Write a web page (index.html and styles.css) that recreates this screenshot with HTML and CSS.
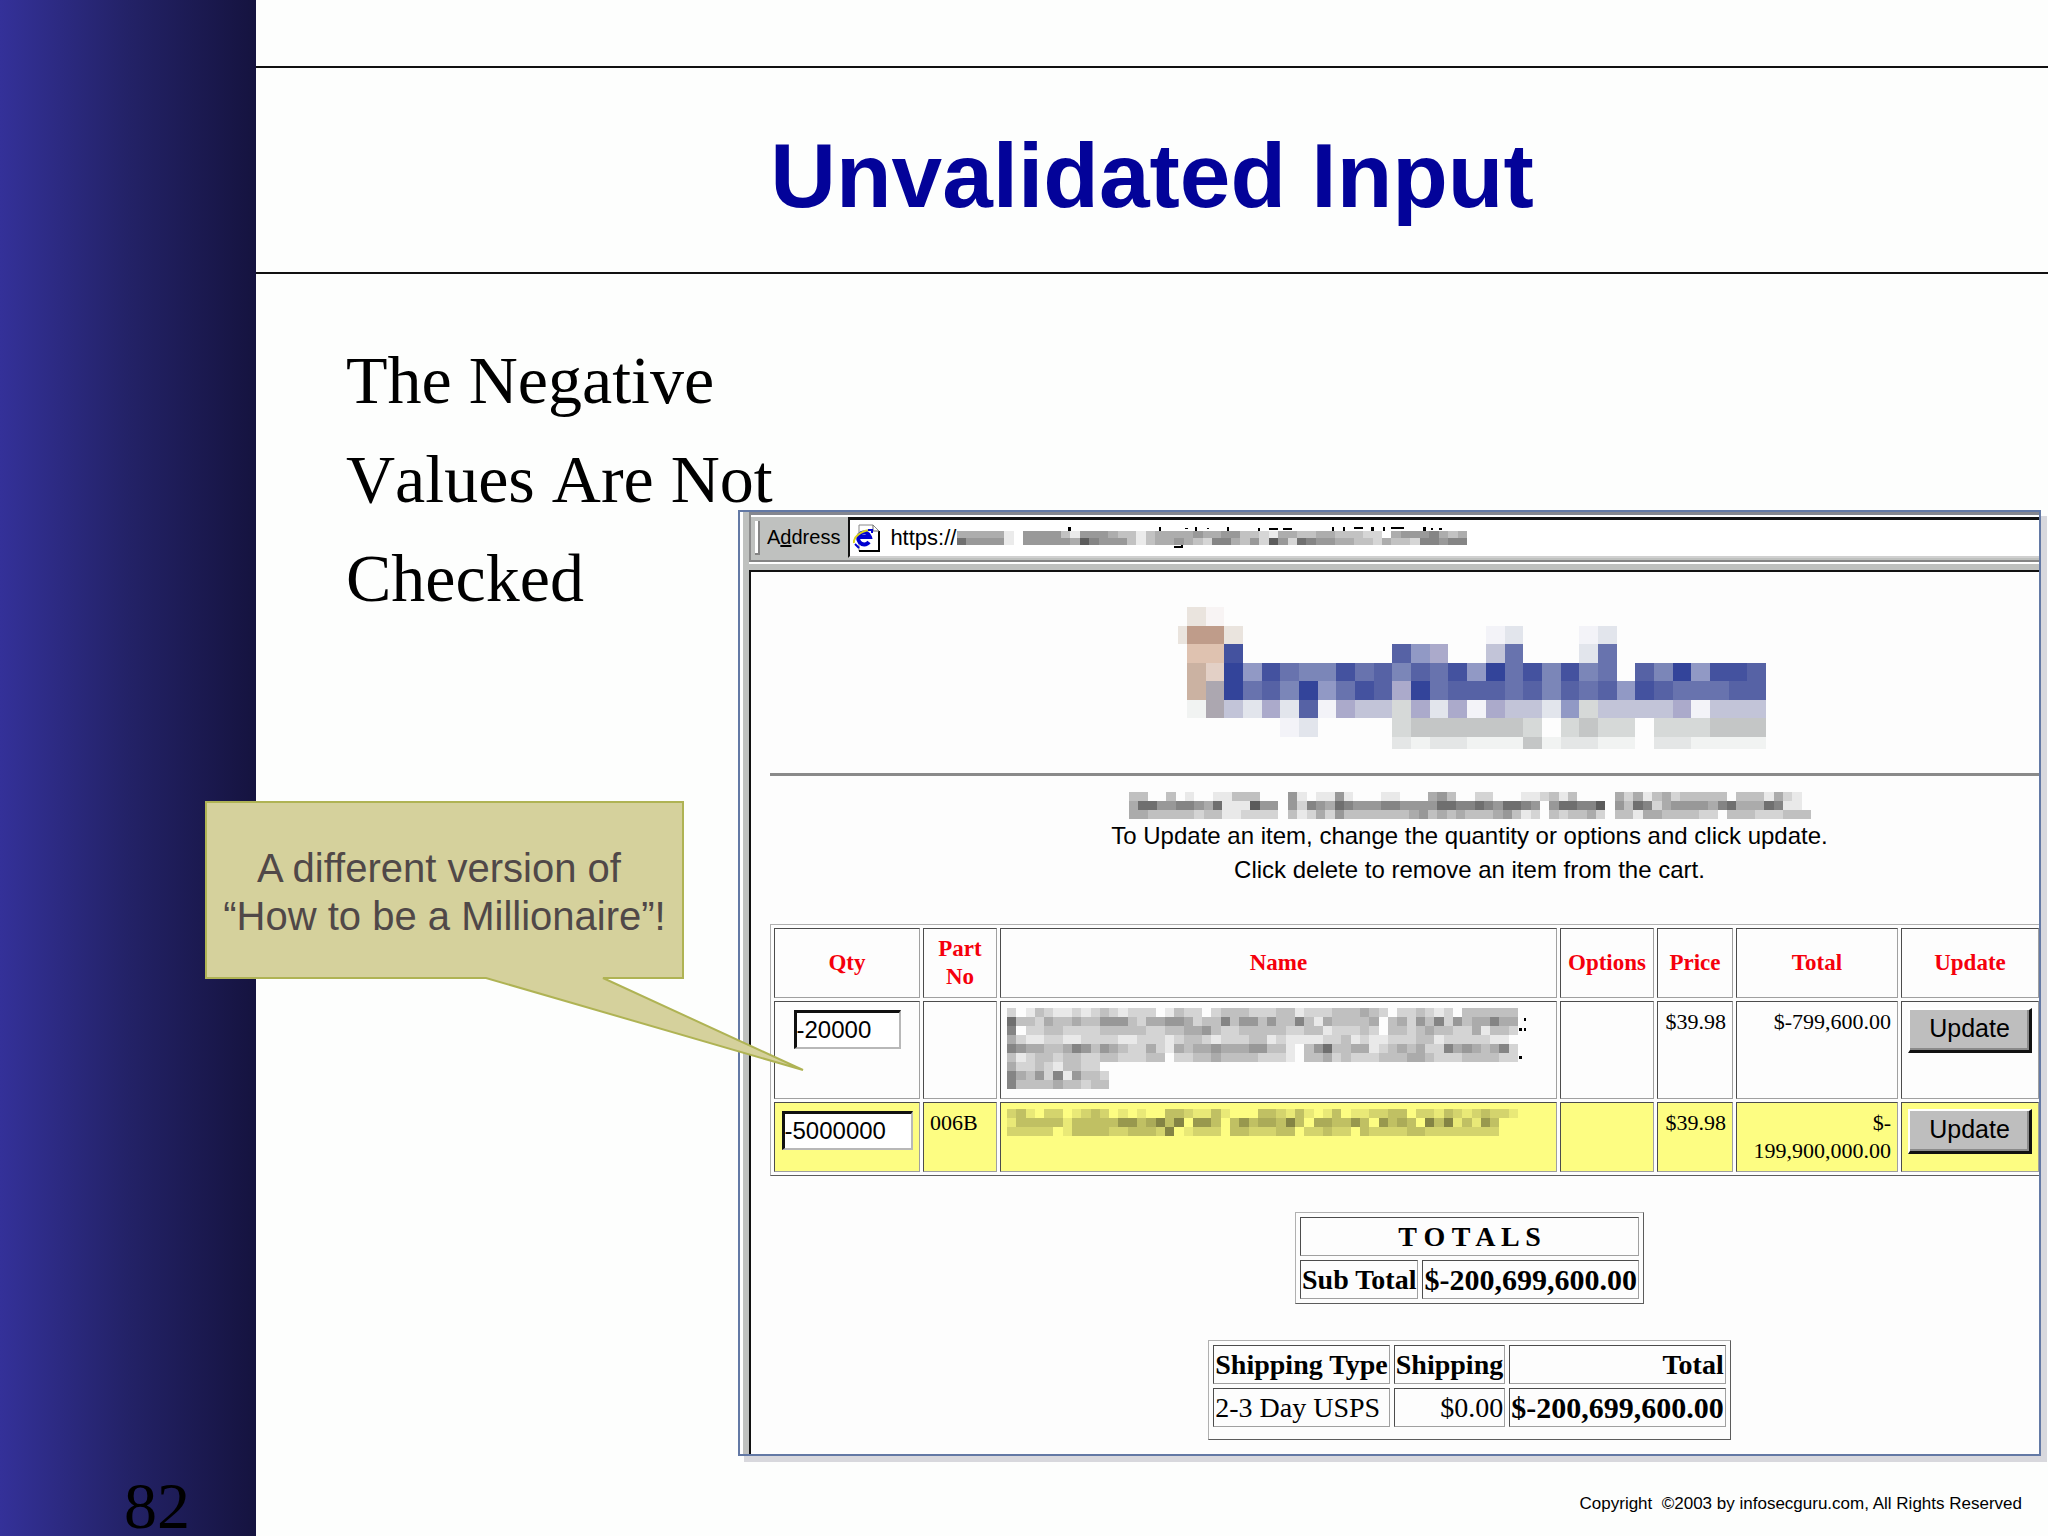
FILE: index.html
```html
<!DOCTYPE html>
<html lang="en">
<head>
    <meta charset="UTF-8">
    <meta name="viewport" content="width=device-width, initial-scale=1.0">
    <title>Unvalidated Input</title>
    <link rel="stylesheet" href="styles.css">
</head>
<body>
    <aside class="rail">
        <span class="slide-number">82</span>
    </aside>

    <main class="slide">
        <header>
            <h1>Unvalidated Input</h1>
        </header>

        <section class="content">
            <p class="statement">The Negative<br>Values Are Not<br>Checked</p>

            <div class="window">
                <div class="toolbar">
                    <span class="grip"></span>
                    <label for="address">A<u>d</u>dress</label>
                    <div class="address-box">
                        <svg class="ie-icon" viewBox="0 0 27 28">
                            <path d="M6 1h14l6 6v20H6z" fill="#fff" stroke="#888" stroke-width="1"/>
                            <path d="M6 27h20V7" fill="none" stroke="#000" stroke-width="2"/>
                            <path d="M20 1v6h6" fill="none" stroke="#666" stroke-width="1"/>
                            <path d="M16 18a6 6 0 1 1 1-5H7" fill="none" stroke="#0000d0" stroke-width="4"/>
                            <path d="M1 19C0 13 8 7 17 6" fill="none" stroke="#d8d020" stroke-width="2"/>
                            <path d="M2 20l4 4M15 6h4v3" fill="none" stroke="#0000d0" stroke-width="2"/>
                        </svg>
                        <input id="address" type="text" value="https://">
                        <svg class="mosaic url-mosaic" data-grid="url">
                            <!-- tops and tails of the letters that stick out of the cells -->
                            <path d="M11.9 -.6v.6M21.5 -.6v.6M24.3 -.5v.2M25.3 -.6v.6M26.6 -.5v.2M28.7 -.6v.6M32 -.4v.4M33 -.3h1M34.5 -.3h1M39.8 -.6v.6M41 -.6v.6M42 -.4h1M44 -.6v.6M45.2 -.6v.6M46 -.4h1.3M49.5 -.6v.6M50.3 -.5v.3M51.2 -.5v.4M23 2.3h.9M23.8 2v.3" fill="none" stroke="#000" stroke-width=".25"/>
                        </svg>
                    </div>
                </div>

                <div class="pane">
                    <div class="page">
                        <svg class="mosaic logo-mosaic" data-grid="logo">
                            <rect x="-0.5" y="1" width="0.5" height="1" fill="#eae4de"/>
                        </svg>
                        <hr>
                        <svg class="mosaic title-mosaic" data-grid="title"></svg>
                        <p class="hint">To Update an item, change the quantity or options and click update.<br>Click delete to remove an item from the cart.</p>

                        <table class="cart">
                            <colgroup>
                                <col class="col-qty">
                                <col class="col-part">
                                <col>
                                <col class="col-options">
                                <col class="col-price">
                                <col class="col-total">
                                <col class="col-update">
                            </colgroup>
                            <tr>
                                <th>Qty</th>
                                <th>Part No</th>
                                <th>Name</th>
                                <th>Options</th>
                                <th>Price</th>
                                <th>Total</th>
                                <th>Update</th>
                            </tr>
                            <tr class="row-tall">
                                <td class="center"><input class="qty" type="text" value="-20000" aria-label="Qty"></td>
                                <td></td>
                                <td>
                                    <svg class="mosaic name-mosaic" data-grid="name">
                                        <path d="M55.1 2.4h.3M55.6 2.4h.3M55.6 1.3h.3M55.1 5.5h.3" stroke="#000" stroke-width=".3"/>
                                    </svg>
                                </td>
                                <td></td>
                                <td class="right">$39.98</td>
                                <td class="right">$-799,600.00</td>
                                <td><button type="button">Update</button></td>
                            </tr>
                            <tr class="highlight">
                                <td class="center"><input class="qty qty-wide" type="text" value="-5000000" aria-label="Qty"></td>
                                <td>006B</td>
                                <td><svg class="mosaic item-mosaic" data-grid="item"></svg></td>
                                <td></td>
                                <td class="right">$39.98</td>
                                <td class="right">$-<br>199,900,000.00</td>
                                <td><button type="button">Update</button></td>
                            </tr>
                        </table>

                        <table class="summary">
                            <tr>
                                <th colspan="2">T O T A L S</th>
                            </tr>
                            <tr>
                                <th>Sub Total</th>
                                <th class="amount">$-200,699,600.00</th>
                            </tr>
                        </table>

                        <table class="summary shipping">
                            <tr>
                                <th>Shipping Type</th>
                                <th>Shipping</th>
                                <th class="right">Total</th>
                            </tr>
                            <tr>
                                <td>2-3 Day USPS</td>
                                <td class="right">$0.00</td>
                                <th class="amount">$-200,699,600.00</th>
                            </tr>
                        </table>
                    </div>
                </div>
            </div>
        </section>

        <footer>Copyright &nbsp;©2003 by infosecguru.com, All Rights Reserved</footer>

        <div class="callout">
            <svg class="callout-shape" viewBox="0 0 600 272">
                <path d="M1 1H478V177H398L598 269L281 177H1Z" fill="#d5d19c" stroke="#afb354" stroke-width="2"/>
            </svg>
            <p>A different version of&nbsp;<br>“How to be a Millionaire”!</p>
        </div>
    </main>

    <script src="mosaic.js"></script>
</body>
</html>
```

FILE: styles.css
```css
* {
    box-sizing: border-box;
}
body {
    margin: 0;
    display: flex;
    min-height: 100vh;
    background: #fdfefd;
    color: #000;
    font-family: "Liberation Sans", Arial, sans-serif;
}
p, h1 {
    margin: 0;
}
.rail {
    flex: 0 0 256px;
    display: flex;
    align-items: flex-end;
    justify-content: flex-end;
    padding: 0 66px 0 0;
    background: linear-gradient(to right, #343199, #232267 50%, #15133f);
}
.slide-number {
    font-family: "Liberation Serif", "Times New Roman", serif;
    font-size: 66px;
    line-height: 60px;
}
.slide {
    position: relative;
    flex: 1;
    min-width: 0;
}
header {
    margin-top: 66px;
    padding: 56px 0 44px;
    border-top: 2px solid #111;
    border-bottom: 2px solid #111;
    text-align: center;
}
h1 {
    font-size: 91px;
    line-height: 104px;
    color: #030399;
}
.content {
    display: grid;
    grid-template-columns: 392px 1fr;
    padding: 0 7px 0 90px;
}
.statement {
    margin-top: 57px;
    font-family: "Liberation Serif", "Times New Roman", serif;
    font-size: 68px;
    font-kerning: none;
    line-height: 99px;
    white-space: nowrap;
}
.window {
    min-width: 0;
    margin-top: 236px;
    padding-left: 9px;
    background: linear-gradient(to right, #fff 3px, #bfc1bf 3px);
    border: 2px solid #6379a5;
    box-shadow: 6px 6px 0 #d8d8dd;
}

/* address bar */
.toolbar {
    display: flex;
    align-items: stretch;
    height: 50px;
    border-top: 3px solid #85878f;
    border-left: 2px solid #8a8a8a;
    border-bottom: 2px solid #858585;
    box-shadow: inset 0 2px #fff, 0 2px #fff;
}
.grip {
    width: 5px;
    margin: 6px 7px 5px 4px;
    background: #fff;
    border-right: 2px solid #858585;
    border-bottom: 2px solid #858585;
}
.toolbar label {
    padding-right: 8px;
    font-size: 20px;
    line-height: 44px;
}
.address-box {
    flex: 1;
    display: flex;
    align-items: center;
    margin: 2px 0;
    padding-left: 3px;
    background: #fff;
    border-top: 3px solid #111;
    border-left: 2px solid #111;
    border-bottom: 2px solid #d0d0d0;
}
.ie-icon {
    width: 27px;
    height: 28px;
}
.address-box input {
    width: 77px;
    padding: 0 0 0 10px;
    border: 0;
    background: none;
    font: 22px "Liberation Sans", Arial, sans-serif;
}
.mosaic {
    display: block;
    overflow: visible;
}
.url-mosaic {
    width: 510px;
    height: 14px;
}

/* shop page */
.pane {
    margin-top: 8px;
    border-top: 2px solid #111;
    border-left: 2px solid #111;
    background: #fdfdfd;
    overflow: hidden;
}
.page {
    margin-right: -130px;
    padding: 35px 0 14px 19px;
}
.logo-mosaic {
    width: 593px;
    height: 148px;
    margin: 0 auto;
    padding-left: 14px;
}
hr {
    margin: 18px 0 16px;
    border: 0;
    border-top: 3px solid #8a8a8a;
}
.title-mosaic {
    width: 682px;
    height: 27px;
    margin: 0 auto;
}
.hint {
    font-size: 24px;
    line-height: 34px;
    text-align: center;
}
table {
    border: 1px outset #b0b0b0;
    font-family: "Liberation Serif", "Times New Roman", serif;
}
th, td {
    border: 1px inset #a0a0a0;
}
.right {
    text-align: right;
}
.center {
    text-align: center;
}
.cart {
    table-layout: fixed;
    width: calc(100% - 126px);
    margin-top: 37px;
    border-spacing: 3px;
    font-size: 22px;
    line-height: 28px;
}
.cart th {
    height: 70px;
    padding: 0 6px;
    font-size: 23px;
    color: #f5000c;
}
.cart td {
    height: 70px;
    padding: 6px 6px 4px;
    vertical-align: top;
}
.cart .row-tall td {
    height: 98px;
}
.highlight td {
    background: #fdfd82;
}
.col-qty { width: 146px; }
.col-part { width: 74px; }
.col-options { width: 94px; }
.col-price { width: 76px; }
.col-total { width: 162px; }
.col-update { width: 138px; }
.qty {
    display: block;
    width: 107px;
    height: 39px;
    margin: 2px auto 0;
    padding: 0;
    border: 2px solid #b8b8b8;
    border-top: 3px solid #111;
    border-left: 3px solid #111;
    border-radius: 0;
    background: #fff;
    font: 24px "Liberation Sans", Arial, sans-serif;
}
.qty-wide {
    width: 131px;
}
button {
    display: block;
    width: 124px;
    height: 45px;
    padding: 0 0 4px;
    border: 2px solid #fff;
    border-right: 3px solid #111;
    border-bottom: 3px solid #111;
    box-shadow: inset -2px -2px #8a8a8a;
    border-radius: 0;
    background: #bebebe;
    color: #000;
    font: 25px "Liberation Sans", Arial, sans-serif;
}
.name-mosaic {
    width: 511px;
    height: 81px;
}
.item-mosaic {
    width: 511px;
    height: 27px;
}
.summary {
    margin: 36px auto 0;
    border-spacing: 4px;
    font-size: 28px;
    line-height: 37px;
}
.summary th, .summary td {
    padding: 0 1px;
}
.summary .amount {
    font-size: 30px;
}
.shipping {
    padding-bottom: 8px;
}

footer {
    margin: 36px 26px 0 0;
    font-size: 17px;
    line-height: 24px;
    text-align: right;
}

/* speech callout pointing at the quantity box */
.callout {
    position: absolute;
    top: 801px;
    left: -51px;
    width: 479px;
    padding: 43px 0 39px;
    font-size: 40px;
    line-height: 48px;
    text-align: center;
    color: #504848;
    white-space: nowrap;
}
.callout-shape {
    position: absolute;
    top: 0;
    left: 0;
    width: 600px;
    height: 272px;
}
.callout p {
    position: relative;
}
```

FILE: mosaic.js
```js
// Each character is one cell: digits are shades, "." is empty
const grids = {
    logo: [
        "cf.............................",
        "aac.............01...01........",
        "bb8........743..26...16........",
        "de948655867576849685856.7594887",
        "dk96759468739677767576748766677",
        "jk213170322h313032214h222230222",
        ".....01....hggggggh.hghh.hhhggg",
        "...........ijiijjjgjiijj.iijjjj"
    ],
    title: [
        "33..3.1..11333...51.1151...11...453..22...112313....424134233333.3331421.",
        "4775566547111855.526547655566555577667657765.577668.53762455554674447611.",
        "4433333233112222.312425333333345343433345312.323342.33144333322.333222333"
    ],
    url: [
        "444441.55553155543313444454455332144334433322.45556434",
        "755551.55555486555313445432664352852765544332433266566"
    ],
    name: [
        "2.13211212321222.1322.2333222331222333432.223212.333333",
        "7332433433555324455423363553533631433334.34253625344644",
        "6.22332222333332233445322333332233122232.33234332241332",
        "421122112222112221233212223312111122312112223312222211.",
        "6544334653543224214344544455331.35733441234342264543462",
        "31233233223322233.2233433332221.33423222333443222333322",
        "4223213322.............................................",
        "64352615332............................................",
        "63333433233............................................"
    ],
    item: [
        "231.22.1232.1.1..3321131...332131.13.112233.22132123221",
        "1333331333335534636.553.35344363.443353.5343.63613153.",
        "22222.133332233326.1222.3322233.22322.322223322222222"
    ]
};

const logoColors = {
    a: "#bf9c8a", b: "#dfc2b0", c: "#eae4de", d: "#cbb2a2", e: "#e3d0c6",
    f: "#f8f4f4", k: "#aca7b0", g: "#c4c6c6", h: "#d6d9d8", i: "#e4e6e6", j: "#f1f3f2",
    0: "#f3f3f8", 1: "#e2e5ec", 2: "#c2c4d8", 3: "#abaacb", 4: "#9199c5",
    5: "#7b86b8", 6: "#6873ae", 7: "#5662a5", 8: "#44529f", 9: "#33449a"
};

document.querySelectorAll(".mosaic").forEach(svg => {
    const name = svg.dataset.grid;
    const rows = grids[name];
    svg.setAttribute("viewBox", `0 0 ${rows[0].length} ${rows.length}`);
    svg.setAttribute("preserveAspectRatio", "none");
    svg.setAttribute("shape-rendering", "crispEdges");

    rows.forEach((row, y) => {
        // the logo's last row of cells is cut short
        const height = name === "logo" && y === rows.length - 1 ? 0.65 : 1;
        [...row].forEach((cell, x) => {
            if (cell === ".") return;
            const rect = document.createElementNS("http://www.w3.org/2000/svg", "rect");
            rect.setAttribute("x", x);
            rect.setAttribute("y", y);
            rect.setAttribute("width", 1);
            rect.setAttribute("height", height);
            if (name === "logo") {
                rect.setAttribute("fill", logoColors[cell]);
            } else {
                rect.setAttribute("fill-opacity", cell * 0.08);
            }
            svg.appendChild(rect);
        });
    });
});
```
